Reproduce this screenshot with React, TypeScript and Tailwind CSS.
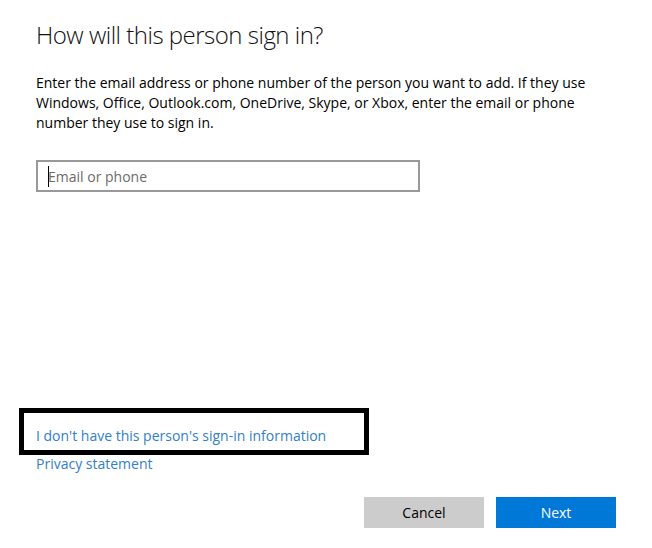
import React from "react";

export default function App() {
  return (
    <div
      className="relative w-[652px] h-[548px] bg-white flex flex-col px-9 pt-[19px] pb-[20px] text-black"
      style={{ fontFamily: '"Open Sans", "Noto Sans", sans-serif' }}
    >
      <h1 className="text-[24px] leading-[32px] font-light tracking-[-0.5px] text-[#111]">
        How will this person sign in?
      </h1>
      <p className="mt-[22px] text-[14px] leading-[20px] w-[560px]">
        Enter the email address or phone number of the person you want to add. If they use
        Windows, Office, Outlook.com, OneDrive, Skype, or Xbox, enter the email or phone
        number they use to sign in.
      </p>
      <div className="relative mt-[27px] w-[384px] h-[32px]">
        <input
          type="text"
          placeholder="Email or phone"
          className="w-full h-full border-2 border-[#999999] bg-white pl-[10px] pr-2 text-[14px] leading-[20px] outline-none placeholder:text-[#6b6b6b]"
          style={{ fontFamily: '"Open Sans", sans-serif' }}
        />
        <span className="absolute left-[12px] top-[6px] w-px h-[21px] bg-black" />
      </div>
      <div className="flex-1" />
      <div className="flex flex-col gap-[8px] text-[14px] leading-[20px] text-[#3180c8]">
        <a href="#" className="self-start">I don't have this person's sign-in information</a>
        <a href="#" className="self-start">Privacy statement</a>
      </div>
      <div className="mt-[23px] flex justify-end gap-[12px] text-[14px]">
        <button className="w-[120px] h-[31px] bg-[#cccccc] text-black">Cancel</button>
        <button className="w-[120px] h-[31px] bg-[#0078d7] text-white">Next</button>
      </div>
      <div className="absolute left-[19px] top-[408px] w-[350px] h-[47px] border-[5px] border-black pointer-events-none" />
    </div>
  );
}
